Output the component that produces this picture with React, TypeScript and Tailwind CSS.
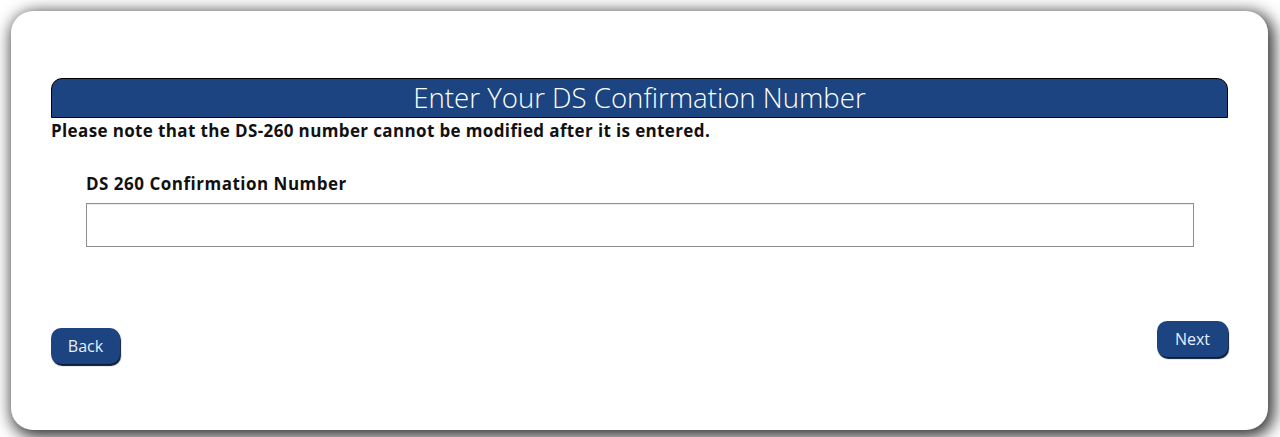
import React from "react";

export default function App() {
  return (
    <div className="w-[1280px] h-[437px] bg-white pt-[11px] pl-[11px] overflow-hidden" style={{ fontFamily: '"Open Sans", "Noto Sans", sans-serif' }}>
      <div className="w-[1257px] h-[419px] bg-white rounded-[22px] shadow-[3px_4px_16px_3px_rgba(0,0,0,0.8)] pt-[67px] px-[40px] flex flex-col">
        <div className="h-[40px] bg-[#1c4480] border border-black rounded-t-[11px] flex items-center justify-center">
          <span className="text-white text-[27.6px] font-light leading-none tracking-[0px] -mt-[1px]">Enter Your DS Confirmation Number</span>
        </div>
        <p className="text-[17px] font-bold text-[#111] leading-[26px] tracking-[0.37px]">Please note that the DS-260 number cannot be modified after it is entered.</p>
        <div className="pl-[35px] mt-[30px]">
          <label className="block text-[17px] font-bold text-[#111] leading-[20px] tracking-[0.5px]">DS 260 Confirmation Number</label>
          <input type="text" className="mt-[9px] block w-[1108px] h-[44px] border border-[#8f8f8f] bg-white outline-none shadow-[inset_0_1px_1px_rgba(0,0,0,0.08)]" />
        </div>
        <div className="flex justify-between mt-[74px]">
          <button className="mt-[7px] w-[69px] h-[36px] bg-[#1c4480] rounded-[10px] text-[#e8eef8] text-[16px] font-normal shadow-[1px_2px_1px_#0a1a33] leading-none">Back</button>
          <button className="w-[71px] h-[36px] bg-[#1c4480] rounded-[10px] text-[#e8eef8] text-[16px] font-normal shadow-[1px_2px_1px_#0a1a33] leading-none">Next</button>
        </div>
      </div>
    </div>
  );
}
